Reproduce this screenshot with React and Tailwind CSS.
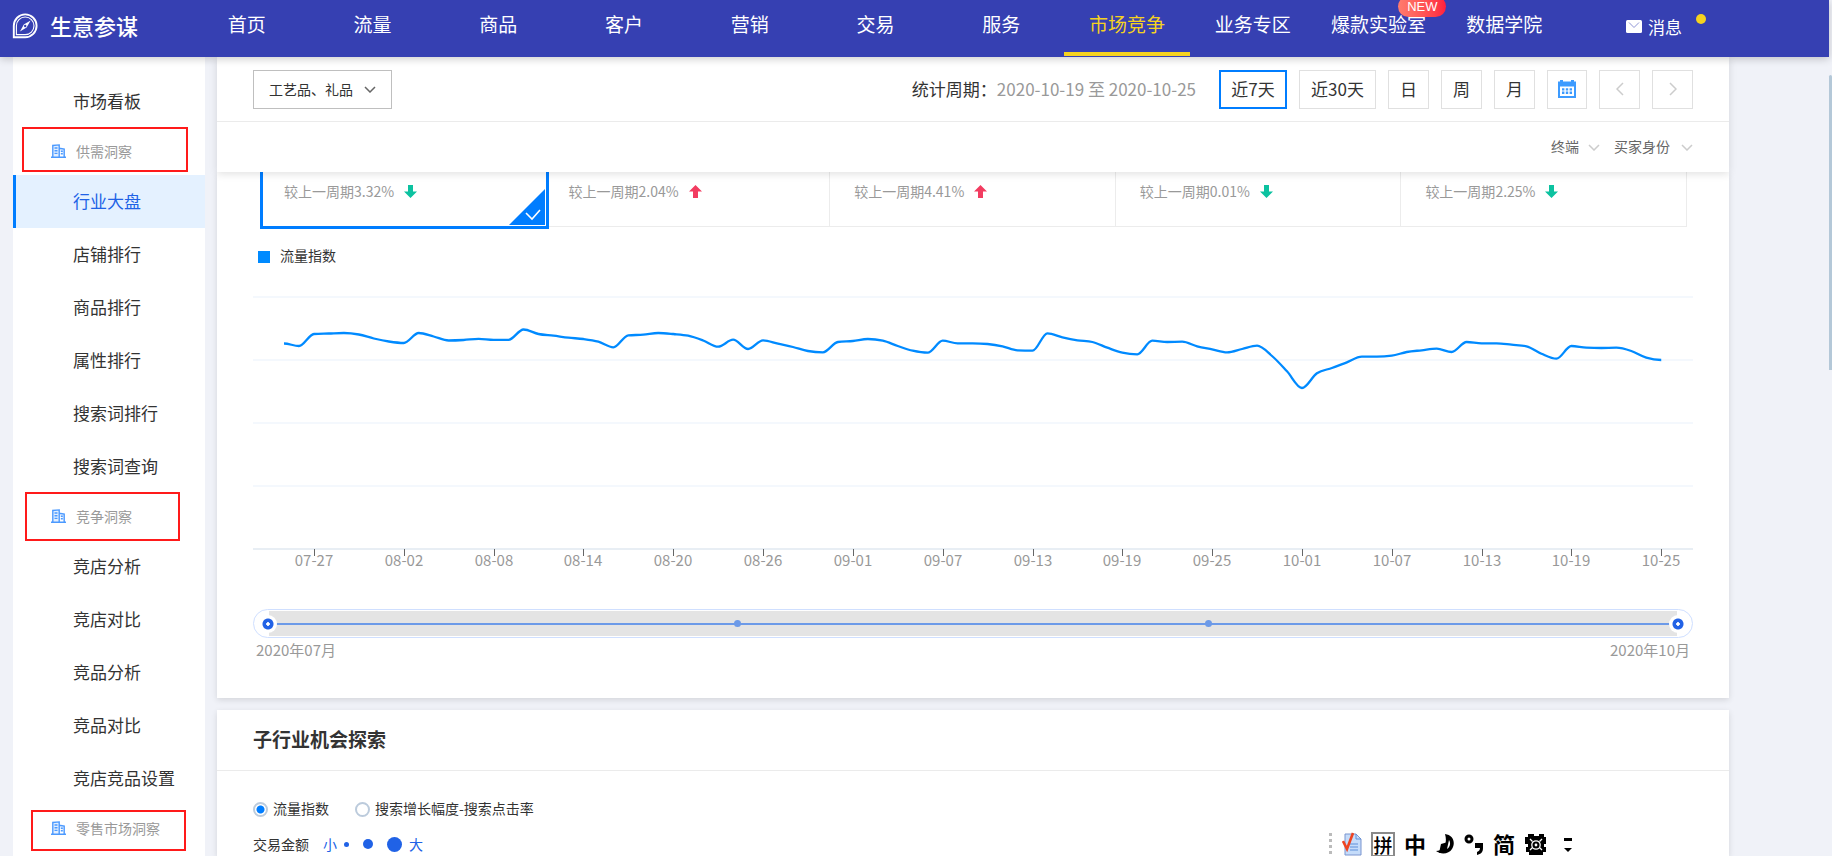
import React, { useState } from 'react';

const navItems = [
  { label: '首页' },
  { label: '流量' },
  { label: '商品' },
  { label: '客户' },
  { label: '营销' },
  { label: '交易' },
  { label: '服务' },
  { label: '市场竞争', active: true },
  { label: '业务专区' },
  { label: '爆款实验室', isNew: true },
  { label: '数据学院' },
];

const menuGroups = [
  { items: ['市场看板'] },
  {
    title: '供需洞察',
    frame: '-top-px left-[9px] h-[45px] w-[166px]',
    items: ['行业大盘', '店铺排行', '商品排行', '属性排行', '搜索词排行', '搜索词查询'],
  },
  {
    title: '竞争洞察',
    frame: '-top-px left-3 h-[49px] w-[155px]',
    items: ['竞店分析', '竞店对比', '竞品分析', '竞品对比', '竞店竞品设置'],
  },
  { title: '零售市场洞察', frame: 'top-[5px] left-[18px] h-[41px] w-[155px]', items: [] },
];

const metrics = [
  { change: '3.32%', up: false },
  { change: '2.04%', up: true },
  { change: '4.41%', up: true },
  { change: '0.01%', up: false },
  { change: '2.25%', up: false },
];

// daily traffic index, 07-25 to 10-25
const traffic = [
  205.5, 203, 215, 215.5, 216, 214.5, 210.5, 207.5, 206, 216, 212.5, 208.5, 209, 210.2, 209.2, 209.2,
  219.5, 215, 213.3, 211.3, 210, 207.3, 201.7, 213.7, 214.3, 216, 215, 213.3, 208.5, 202.3, 209.3, 200,
  208.7, 205.3, 202, 198, 196.7, 207, 208, 210, 208.3, 203, 198.3, 196.3, 208.3, 205.7, 205.7, 205,
  202.7, 198.7, 198.3, 215.7, 211.7, 208.7, 207, 201.3, 196.3, 194.7, 208.3, 207, 207.3, 202.7, 199.7,
  196.7, 200, 203.3, 193, 177.7, 161, 175.7, 181, 186.7, 192.3, 192.3, 193.3, 197, 198.7, 200.3, 197,
  207, 205.7, 205.7, 204.3, 202.7, 195.3, 190.3, 203, 201.3, 201, 201.3, 198, 191.3, 189,
];

const axisDates = [
  '07-27', '08-02', '08-08', '08-14', '08-20', '08-26', '09-01', '09-07',
  '09-13', '09-19', '09-25', '10-01', '10-07', '10-13', '10-19', '10-25',
];

const AXIS_Y = 259;
const pointX = (i) => 31 + i * 14.97;

// monotone cubic curve through the points
const buildPath = (values) => {
  const pts = values.map((v, i) => [pointX(i), AXIS_Y - v]);
  const slopes = pts.map((p, i) => {
    if (i === 0 || i === pts.length - 1) return 0;
    const s0 = (p[1] - pts[i - 1][1]) / (p[0] - pts[i - 1][0]);
    const s1 = (pts[i + 1][1] - p[1]) / (pts[i + 1][0] - p[0]);
    if (s0 * s1 <= 0) return 0;
    return Math.sign(s0) * Math.min(Math.abs(s0), Math.abs(s1), Math.abs(s0 + s1) / 4) * 2;
  });
  let d = `M${pts[0][0]},${pts[0][1]}`;
  for (let i = 1; i < pts.length; i++) {
    const [x0, y0] = pts[i - 1];
    const [x1, y1] = pts[i];
    const dx = (x1 - x0) / 3;
    d += `C${x0 + dx},${y0 + dx * slopes[i - 1]} ${x1 - dx},${y1 - dx * slopes[i]} ${x1},${y1}`;
  }
  return d;
};

const Chevron = ({ className, d = 'M1 1l5 5 5-5', box = '0 0 12 7' }) => (
  <svg className={className} viewBox={box} fill="none" stroke="currentColor" strokeWidth="1.5">
    <path d={d} />
  </svg>
);

const Logo = () => (
  <svg className="h-[26px] w-[26px]" viewBox="0 0 26 26" fill="none" stroke="white">
    <path d="M1.8 24.2V12.8A11.4 11.4 0 1 1 13.2 24.2Z" strokeWidth="1.9" />
    <path d="M4.4 21.6V12.8A8.8 8.8 0 1 1 13.2 21.6Z" strokeWidth="1.1" />
    <path d="M18.6 7.4L14.6 14.6 8 18.4 11.8 11.4Z" fill="white" stroke="none" />
    <circle cx="13.2" cy="13" r="1.2" fill="#3640b2" stroke="none" />
  </svg>
);

const BuildingIcon = () => (
  <svg className="h-[14px] w-[15px]" viewBox="0 0 15 14" fill="none" stroke="#4c9aff" strokeWidth="1.4">
    <path d="M0 13.3h15M1.8 13V1.5L8.2.9V13M8.2 4.2l5 .9V13" fill="#e3efff" />
    <path d="M3.5 4h3M3.5 6.7h3M3.5 9.4h3M9.8 7.2h2M9.8 9.8h2" />
  </svg>
);

const TrendArrow = ({ up }) => (
  <svg className={`h-[13px] w-[13px] ${up ? 'text-[#f23c60]' : 'rotate-180 text-[#0cc2a0]'}`} viewBox="0 0 13 13" fill="currentColor">
    <path d="M6.5 0L13 6.6H9V13H4V6.6H0Z" />
  </svg>
);

const Header = () => (
  <header className="relative z-20 flex h-[57px] shrink-0 bg-[#3640b2] text-white shadow-[0_2px_8px_rgba(0,0,0,0.2)]">
    <a href="#home" className="flex w-[184px] items-center gap-3 pb-1.5 pl-3">
      <Logo />
      <span className="text-[22px] font-medium">生意参谋</span>
    </a>
    <nav className="flex flex-1">
      {navItems.map((item) => (
        <a
          key={item.label}
          href={`#${item.label}`}
          className={`relative flex-1 border-b-4 pt-2.5 text-center text-[19px] leading-[28px] whitespace-nowrap ${
            item.active ? 'mb-px border-[#f5d21f] text-[#f5d21f]' : 'border-transparent'
          }`}
        >
          {item.label}
          {item.isNew && (
            <span className="absolute -top-1 right-[-5px] h-[21px] w-12 rounded-full bg-linear-to-r from-[#ff7b6e] to-[#ff1c3e] text-center font-['Liberation_Sans',sans-serif] text-[13px] leading-[22px]">
              NEW
            </span>
          )}
        </a>
      ))}
    </nav>
    <a href="#messages" className="flex w-[262px] items-center pb-1 pl-[59px] text-[17px]">
      <svg className="h-[13px] w-4" viewBox="0 0 16 13">
        <rect width="16" height="13" rx="1.5" fill="white" />
        <path d="M3 2.5l5 5 5-5" fill="none" stroke="#8f95d6" strokeWidth="1" />
      </svg>
      <span className="ml-1.5">消息</span>
      <span className="mb-4 ml-[14px] h-2.5 w-2.5 rounded-full bg-[#f5d21f]" />
    </a>
  </header>
);

const Sidebar = () => (
  <aside className="w-48 shrink-0 bg-white pt-[18px]">
    {menuGroups.map((group, i) => (
      <div key={i}>
        {group.title && (
          <h2 className="relative flex h-[47px] items-center gap-2.5 pb-0.5 pl-[38px] text-sm text-[#999]">
            <BuildingIcon />
            {group.title}
            <span className={`absolute border-2 border-[#ff1a1a] ${group.frame}`} />
          </h2>
        )}
        {group.items.map((item) => (
          <a
            key={item}
            href={`#${item}`}
            className={`flex h-[53px] items-center border-l-[3px] pb-0.5 pl-[57px] text-[17px] ${
              item === '行业大盘' ? 'border-[#007dff] bg-[#e4f1ff] text-[#2062e6]' : 'border-transparent text-[#333]'
            }`}
          >
            {item}
          </a>
        ))}
      </div>
    ))}
  </aside>
);

const CalendarIcon = () => (
  <svg className="h-[18px] w-[18px]" viewBox="0 0 18 18" fill="#3d9bff">
    <path fillRule="evenodd" d="M0 1.5h2V0h3v1.5h8V0h3v1.5h2V18H0ZM2 6.5V16h14V6.5Z" />
    <path d="M4 8.2h2.4v2.4H4zM7.8 8.2h2.4v2.4H7.8zM11.6 8.2H14v2.4h-2.4zM4 11.6h2.4V14H4zM7.8 11.6h2.4V14H7.8zM11.6 11.6H14V14h-2.4z" />
  </svg>
);

const periods = [
  { label: '近7天', width: 'w-[68px]' },
  { label: '近30天', width: 'w-[77px]' },
  { label: '日', width: 'w-[41px]' },
  { label: '周', width: 'w-[41px]' },
  { label: '月', width: 'w-[41px]' },
];

const FilterBar = () => {
  const [period, setPeriod] = useState('近7天');

  return (
    <section className="relative z-10 bg-white shadow-[0_2px_8px_rgba(0,0,0,0.12)]">
      <div className="flex h-[65px] items-center border-b border-[#ebebeb] px-9">
        <div className="relative">
          <select
            aria-label="行业类目"
            className="h-[39px] w-[139px] appearance-none border border-[#bfbfbf] pl-[15px] text-sm text-[#333]"
          >
            <option>工艺品、礼品</option>
          </select>
          <Chevron className="pointer-events-none absolute top-4 right-4 h-[7px] w-3 text-[#666]" />
        </div>
        <p className="ml-auto text-[17px] text-[#333]">统计周期：</p>
        <p className="text-[17px] text-[#999]">2020-10-19 至 2020-10-25</p>
        <div className="ml-[23px] flex gap-3">
          {periods.map((p) => (
            <button
              key={p.label}
              type="button"
              onClick={() => setPeriod(p.label)}
              className={`h-[39px] text-[17px] text-[#333] ${p.width} ${
                period === p.label ? 'border-2 border-[#007dff]' : 'border border-[#e0e0e0]'
              }`}
            >
              {p.label}
            </button>
          ))}
          <button type="button" aria-label="选择日期" className="flex h-[39px] w-10 items-center justify-center border border-[#e0e0e0]">
            <CalendarIcon />
          </button>
          <button type="button" aria-label="上一周期" className="flex h-[39px] w-[41px] items-center justify-center border border-[#e0e0e0] text-[#ccc]">
            <Chevron className="h-3.5 w-2" d="M7 1L1 7l6 6" box="0 0 8 14" />
          </button>
          <button type="button" aria-label="下一周期" className="flex h-[39px] w-[41px] items-center justify-center border border-[#e0e0e0] text-[#ccc]">
            <Chevron className="h-3.5 w-2" d="M1 1l6 6-6 6" box="0 0 8 14" />
          </button>
        </div>
      </div>
      <div className="flex h-[50px] items-center justify-end gap-[14px] px-9 pb-[3px] text-sm text-[#666]">
        <div className="relative">
          <select aria-label="终端" className="w-[49px] appearance-none">
            <option>终端</option>
          </select>
          <Chevron className="pointer-events-none absolute top-2 right-0 h-[7px] w-3 text-[#ccc]" />
        </div>
        <div className="relative">
          <select aria-label="买家身份" className="w-[79px] appearance-none">
            <option>买家身份</option>
          </select>
          <Chevron className="pointer-events-none absolute top-2 right-0 h-[7px] w-3 text-[#ccc]" />
        </div>
      </div>
    </section>
  );
};

const TrafficChart = () => (
  <svg className="mt-6 w-full" viewBox="0 0 1440 290">
    {[7, 70, 133, 196].map((y) => (
      <path key={y} d={`M0 ${y}H1440`} stroke="#f4f8fd" strokeWidth="2" />
    ))}
    <path d={`M0 ${AXIS_Y}H1440`} stroke="#e8eef4" strokeWidth="2" />
    {axisDates.map((date, i) => {
      const x = Math.round(pointX(2 + i * 6));
      return (
        <g key={date}>
          <path d={`M${x + 0.5} 259v7`} stroke="#666" />
          <text x={x} y="276" textAnchor="middle" fontSize="15" fill="#999">
            {date}
          </text>
        </g>
      );
    })}
    <path d={buildPath(traffic)} fill="none" stroke="#008aff" strokeWidth="2.3" />
  </svg>
);

const thumb =
  'pointer-events-none absolute inset-x-[5px] top-[5px] h-[18px] appearance-none bg-transparent [&::-webkit-slider-thumb]:pointer-events-auto [&::-webkit-slider-thumb]:h-[18px] [&::-webkit-slider-thumb]:w-[18px] [&::-webkit-slider-thumb]:appearance-none [&::-webkit-slider-thumb]:rounded-full [&::-webkit-slider-thumb]:bg-[radial-gradient(circle,white_1.5px,#2262e6_2px,#2262e6_5px,white_6px)]';

const RangeSlider = () => (
  <>
    <div className="relative mt-[29px] flex h-[29px] items-center rounded-full border border-[#cfdfff] px-[15px]">
      <div className="flex h-[25px] flex-1 items-center bg-[#e4e4e4]">
        <div className="relative flex h-0.5 flex-1 items-center justify-evenly bg-[#6c9ae8]">
          <span className="h-[7px] w-[7px] rounded-full bg-[#6c9ae8]" />
          <span className="h-[7px] w-[7px] rounded-full bg-[#6c9ae8]" />
        </div>
      </div>
      <input type="range" aria-label="开始日期" min="0" max="92" defaultValue="0" className={thumb} />
      <input type="range" aria-label="结束日期" min="0" max="92" defaultValue="92" className={thumb} />
    </div>
    <div className="mt-px flex justify-between px-[3px] text-[15px] leading-[22px] text-[#999]">
      <span>2020年07月</span>
      <span>2020年10月</span>
    </div>
  </>
);

const TrendCard = () => (
  <section className="bg-white px-9 pb-[37px] shadow-[0_2px_6px_rgba(0,0,0,0.12)]">
    <div className="mr-1.5 ml-[7px] flex h-[55px] border-r border-b border-[#ececec]">
      {metrics.map((m, i) => (
        <div
          key={m.change}
          className={`relative flex flex-1 gap-2.5 pt-2 pl-6 text-sm leading-[22px] text-[#999] ${i > 1 ? 'border-l border-[#ececec]' : ''}`}
        >
          <span>较上一周期{m.change}</span>
          <span className="pt-[5px]">
            <TrendArrow up={m.up} />
          </span>
          {i === 0 && (
            <div className="absolute -top-3 -right-1 -bottom-[3px] left-0 border-[3px] border-[#007dff]">
              <svg className="absolute right-px bottom-px h-9 w-9" viewBox="0 0 36 36">
                <path d="M36 0V36H0Z" fill="#007dff" />
                <path d="M17 24l6 6 8-9" fill="none" stroke="white" strokeWidth="1.6" />
              </svg>
            </div>
          )}
        </div>
      ))}
    </div>
    <div className="mt-[19px] flex h-5 items-center gap-2.5 pl-[5px] text-sm text-[#333]">
      <span className="mt-px h-3 w-3 bg-[#008aff]" />
      <span className="pb-0.5">流量指数</span>
    </div>
    <TrafficChart />
    <RangeSlider />
  </section>
);

const radioClass =
  'h-[15px] w-[15px] appearance-none rounded-full border-2 border-[#bccbdc] checked:bg-[radial-gradient(circle,#007dff_3.5px,white_4.5px)]';

const OpportunityCard = () => {
  const [mode, setMode] = useState('index');

  return (
    <section className="mt-3 flex-1 bg-white text-sm text-[#333] shadow-[0_2px_6px_rgba(0,0,0,0.12)]">
      <h2 className="flex h-[61px] items-center border-b border-[#ebebeb] px-9 pb-0.5 text-[19px] font-bold">子行业机会探索</h2>
      <div className="flex h-[50px] items-end gap-[26px] px-9">
        <label className="flex h-6 items-center gap-[5px]">
          <input type="radio" name="mode" checked={mode === 'index'} onChange={() => setMode('index')} className={radioClass} />
          <span className="pb-0.5">流量指数</span>
        </label>
        <label className="flex h-6 items-center gap-[5px]">
          <input type="radio" name="mode" checked={mode === 'growth'} onChange={() => setMode('growth')} className={radioClass} />
          <span className="pb-0.5">搜索增长幅度-搜索点击率</span>
        </label>
      </div>
      <div className="mt-[11px] flex h-6 items-center px-9">
        交易金额
        <span className="ml-3.5 text-[#2062e6]">小</span>
        <span className="ml-[7px] h-[5px] w-[5px] rounded-full bg-[#2062e6]" />
        <span className="ml-3.5 h-2.5 w-2.5 rounded-full bg-[#2062e6]" />
        <span className="ml-3.5 h-[15px] w-[15px] rounded-full bg-[#2062e6]" />
        <span className="ml-[7px] text-[#2062e6]">大</span>
      </div>
    </section>
  );
};

// floating input method bar, partly below the window edge
const InputMethodBar = () => (
  <div className="absolute right-[259px] -bottom-0.5 z-30 flex h-7 items-center gap-[9px] text-[22px] leading-[26px] font-bold text-black">
    <svg className="h-7 w-1" viewBox="0 0 4 28" fill="#bbb">
      <path d="M0 3h3v3H0zM0 9h3v3H0zM0 15h3v3H0zM0 21h3v3H0z" />
    </svg>
    <svg className="h-6 w-5" viewBox="0 0 20 24">
      <path d="M3 2h11l5 5v16H3Z" fill="#c5dcfa" stroke="#7b95cf" />
      <path d="M14 2v5h5M8 12h8M8 15h8M8 18h8" fill="none" stroke="#5f8fd8" />
      <path d="M1 9l4 8L11 1" fill="none" stroke="#ee4422" strokeWidth="2.6" />
    </svg>
    <span className="h-[25px] w-6 border-2 border-[#8a8a8a] text-center text-[19px] leading-[21px] font-medium">拼</span>
    <span className="pb-0.5">中</span>
    <svg className="h-6 w-5" viewBox="0 0 20 24">
      <path d="M10 2C18 3 21 10 17 17C14 22 6 23 1 19C8 19 13 12 10 2Z" />
      <path d="M6 12l7-2-5 10-4 1Z" />
      <path d="M14 8c2 3 1 7-2 9z" fill="white" />
    </svg>
    <svg className="h-6 w-5" viewBox="0 0 20 24">
      <circle cx="5" cy="7" r="3" fill="none" stroke="black" strokeWidth="3" />
      <path d="M11 11h8v5c0 4-2 6-6 7v-3c2-1 3-2 3-4h-5Z" />
    </svg>
    <span className="pb-0.5">简</span>
    <svg className="h-6 w-6" viewBox="0 0 24 24">
      <path d="M4 2h6v2h5V2h5v3h2v7h-2v3h2v5h-3v3H5v-3H2v-5h2v-3H1V5h3Z" />
      <circle cx="12" cy="13" r="4.2" fill="none" stroke="white" strokeWidth="1.3" />
      <path d="M6 7l2.500 2.500M18 7l-2.500 2.500M6 18l2.500-2.500M18 18l-2.500-2.500" stroke="white" strokeWidth="1.3" />
      <circle cx="12" cy="13" r="1.4" fill="white" />
    </svg>
    <svg className="ml-1.5 h-6 w-2.5" viewBox="0 0 10 24">
      <path d="M1 6h8v3H1zM1 16h8l-4 4z" />
    </svg>
  </div>
);

const App = () => {
  return (
    <div className="relative flex h-screen overflow-hidden bg-[#f0f2f8] font-['Noto_Sans_CJK_SC','Noto_Sans',sans-serif]">
      <div className="flex min-w-0 flex-1 flex-col">
        <Header />
        <div className="flex flex-1 pl-[13px]">
          <Sidebar />
          <main className="mr-[100px] ml-3 flex min-w-0 flex-1 flex-col">
            <FilterBar />
            <TrendCard />
            <OpportunityCard />
          </main>
        </div>
      </div>
      <div className="w-[3px] bg-[#f0f2f8] pt-[75px]">
        <div className="h-[295px] rounded-t-full bg-[#b4c8d8]" />
      </div>
      <InputMethodBar />
    </div>
  );
};

export default App;
